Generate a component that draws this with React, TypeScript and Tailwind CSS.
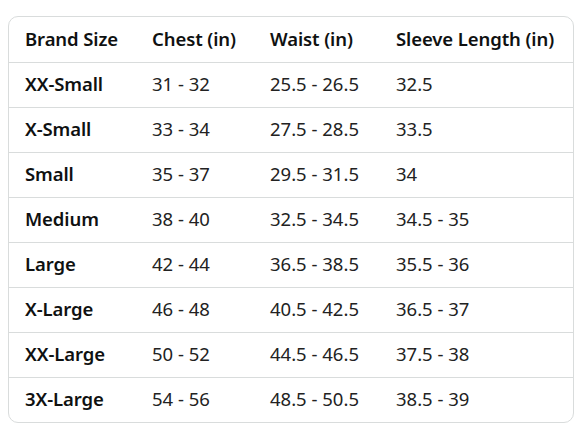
const header = ["Brand Size", "Chest (in)", "Waist (in)", "Sleeve Length (in)"];

const rows = [
  ["XX-Small", "31 - 32", "25.5 - 26.5", "32.5"],
  ["X-Small", "33 - 34", "27.5 - 28.5", "33.5"],
  ["Small", "35 - 37", "29.5 - 31.5", "34"],
  ["Medium", "38 - 40", "32.5 - 34.5", "34.5 - 35"],
  ["Large", "42 - 44", "36.5 - 38.5", "35.5 - 36"],
  ["X-Large", "46 - 48", "40.5 - 42.5", "36.5 - 37"],
  ["XX-Large", "50 - 52", "44.5 - 46.5", "37.5 - 38"],
  ["3X-Large", "54 - 56", "48.5 - 50.5", "38.5 - 39"],
];

export default function App() {
  return (
    <div
      className="min-h-[441px] bg-white pt-4 pl-2 text-[#0f1111]"
      style={{ fontFamily: '"Noto Sans", "Open Sans", sans-serif' }}
    >
      <div className="w-[566px] rounded-[10px] border border-[#d9dcdc] overflow-hidden">
        <div className="grid grid-cols-[127px_118px_126px_1fr] h-[45px] pb-[2px] items-center text-[18.5px] font-semibold tracking-[-0.1px]">
          {header.map((h) => (
            <div key={h} className="pl-4 whitespace-nowrap">
              {h}
            </div>
          ))}
        </div>
        {rows.map((r) => (
          <div
            key={r[0]}
            className="grid grid-cols-[127px_118px_126px_1fr] h-[45px] pb-[2px] items-center border-t border-[#d9dcdc] text-[18.5px] text-[#222]"
          >
            {r.map((c, i) => (
              <div
                key={i}
                className={
                  i === 0
                    ? "pl-4 font-semibold whitespace-nowrap text-[#0f1111] tracking-[-0.1px]"
                    : "pl-4 whitespace-nowrap"
                }
              >
                {c}
              </div>
            ))}
          </div>
        ))}
      </div>
    </div>
  );
}
